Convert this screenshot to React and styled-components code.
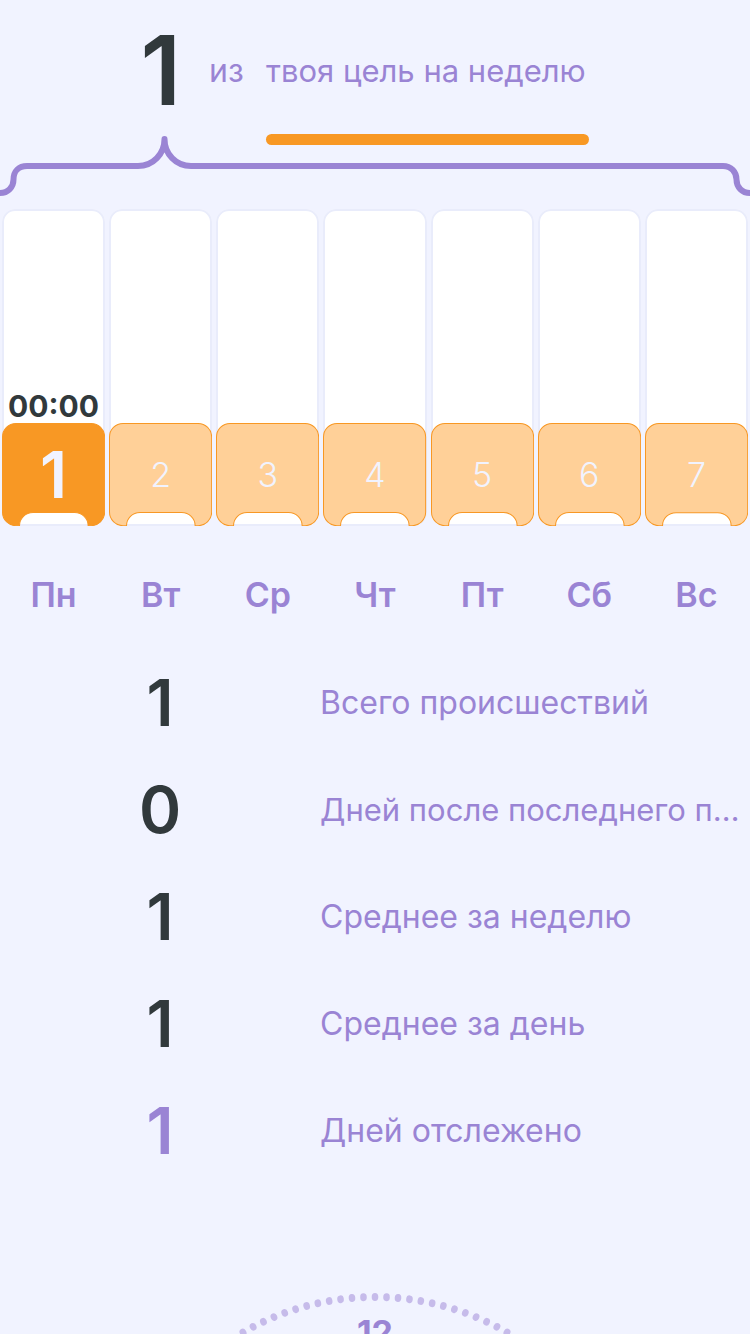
import React from 'react';
import styled, { createGlobalStyle, ThemeProvider } from 'styled-components';

const theme = {
  bg: '#f1f3ff',
  ink: '#31393c',
  violet: '#9a84d4',
  dots: '#c6bbea',
  orange: '#f89824',
  peach: '#ffd098',
  line: '#e9ecfb',
};

const GlobalStyle = createGlobalStyle`
  *, *::before, *::after { box-sizing: border-box; }
  body {
    margin: 0;
    background: ${theme.bg};
    color: ${theme.violet};
    font-family: Inter, "Noto Sans", sans-serif;
    font-size: 32px;
    line-height: 40px;
  }
`;

const Page = styled.main`
  display: flex;
  flex-direction: column;
  height: 100vh;
  overflow-x: hidden;
  overflow-y: auto;
`;

const Header = styled.header`
  flex: none;
  display: grid;
  grid-template-columns: 186fr 80fr 323fr 161fr;
  padding-top: 20px;
`;

const Total = styled.strong`
  padding-right: 5px;
  color: ${({ theme }) => theme.ink};
  font-size: 96px;
  font-weight: 600;
  line-height: 100px;
  text-align: right;
`;

const Of = styled.span`
  padding: 31px 0 0 23px;
`;

const Goal = styled.button`
  display: flex;
  flex-direction: column;
  gap: 43px;
  padding: 31px 0 0;
  border: 0;
  background: none;
  color: inherit;
  font: inherit;
  font-size: 31px;
  text-align: left;
  white-space: nowrap;
  cursor: pointer;

  &::after {
    content: '';
    width: 100%;
    height: 11px;
    border-radius: 6px;
    background: ${({ theme }) => theme.orange};
  }
`;

const Brace = styled.svg`
  flex: none;
  display: block;
  width: 100%;
  margin-top: -11px;
`;

const Week = styled.section`
  flex: none;
  display: grid;
  grid-template-columns: repeat(7, 1fr);
  gap: 4px;
  padding: 9px 2px 0;
`;

const Day = styled.button`
  display: flex;
  flex-direction: column;
  min-width: 0;
  padding: 0;
  border: 0;
  background: none;
  color: inherit;
  font: inherit;
  cursor: pointer;
`;

const Track = styled.span`
  display: flex;
  flex-direction: column;
  width: 100%;
  border-radius: 13px;
  background: #fff;
  box-shadow: inset 0 0 0 2px ${({ theme }) => theme.line};
`;

const Time = styled.span`
  height: 214px;
  padding-top: 177px;
  color: ${({ theme }) => theme.ink};
  font-size: 30px;
  font-weight: 700;
`;

const Tile = styled.span`
  position: relative;
  display: grid;
  place-items: center;
  aspect-ratio: 1;
  color: ${({ theme }) => theme.bg};
  font-size: ${({ $active }) => ($active ? '64px' : '34px')};
  font-weight: ${({ $active }) => ($active ? 600 : 300)};

  svg {
    position: absolute;
    inset: 0;
    width: 100%;
    height: 100%;
  }

  span {
    position: relative;
  }
`;

const DayName = styled.span`
  width: 100%;
  padding-top: 49px;
  font-size: 34px;
  font-weight: 600;
`;

const Stats = styled.dl`
  flex: none;
  display: flex;
  flex-direction: column;
  margin: 34px 0 0;
`;

const Stat = styled.div`
  display: grid;
  grid-template-columns: 32fr 43fr;
  align-items: center;
  height: 107px;
`;

const StatLabel = styled.dt`
  order: 2;
  overflow: hidden;
  font-size: ${({ $long }) => ($long ? '31px' : '32px')};
  text-overflow: ellipsis;
  white-space: nowrap;
`;

const StatValue = styled.dd`
  order: 1;
  margin: 0;
  color: ${({ theme, $muted }) => ($muted ? theme.violet : theme.ink)};
  font-size: 64px;
  font-weight: 600;
  line-height: 64px;
  text-align: center;
`;

const Clock = styled.section`
  flex: 1 0 40px;
  overflow: hidden;
  margin-top: 107px;
  display: flex;
  justify-content: center;

  svg {
    flex: none;
    width: 540px;
    height: 540px;
  }
`;

const TILE =
  'M14 .5H89A13.5 13.5 0 0 1 102.5 14V89A13.5 13.5 0 0 1 89 102.5H86C86 95 80 89.5 72.500 89.5H31C23.500 89.5 17.500 95 17.500 102.500H14A13.5 13.5 0 0 1 .5 89V14A13.5 13.5 0 0 1 14 .5Z';

const days = ['Пн', 'Вт', 'Ср', 'Чт', 'Пт', 'Сб', 'Вс'];

const stats = [
  { label: 'Всего происшествий', value: 1 },
  { label: 'Дней после последнего происшествия', value: 0, long: true },
  { label: 'Среднее за неделю', value: 1 },
  { label: 'Среднее за день', value: 1 },
  { label: 'Дней отслежено', value: 1, muted: true },
];

const ticks = Array.from({ length: 144 }, (_, i) => i * 2.5);

export default function App() {
  return (
    <ThemeProvider theme={theme}>
      <GlobalStyle />
      <Page>
        <Header>
          <Total>1</Total>
          <Of>из</Of>
          <Goal type="button">твоя цель на неделю</Goal>
        </Header>
        <Brace viewBox="0 134 750 66" fill="none" stroke={theme.violet} strokeWidth="6" aria-hidden="true">
          <path
            d="M-2 193H0C8 193 13.500 187 13.500 179.500C13.500 171 19 166 27 166H138C153 166 164.500 154 164.500 139C164.500 154 176 166 191 166H723C731 166 736.500 172 736.500 179.500C736.500 187 742 193 750 193H752"
            strokeLinejoin="round"
          />
        </Brace>
        <Week>
          {days.map((name, i) => (
            <Day key={name} type="button">
              <Track>
                <Time>{i === 0 ? '00:00' : ''}</Time>
                <Tile $active={i === 0}>
                  <svg viewBox="0 0 103 103" aria-hidden="true">
                    <path d={TILE} fill={i === 0 ? theme.orange : theme.peach} stroke={theme.orange} />
                  </svg>
                  <span>{i + 1}</span>
                </Tile>
              </Track>
              <DayName>{name}</DayName>
            </Day>
          ))}
        </Week>
        <Stats>
          {stats.map(({ label, value, muted, long }) => (
            <Stat key={label}>
              <StatLabel $long={long}>{label}</StatLabel>
              <StatValue $muted={muted}>{value}</StatValue>
            </Stat>
          ))}
        </Stats>
        <Clock>
          <svg viewBox="0 0 540 540" role="img" aria-label="12">
            {ticks.map((deg) => (
              <ellipse
                key={deg}
                cx="270"
                cy="6"
                rx="3.300"
                ry="3.900"
                fill={theme.dots}
                transform={`rotate(${deg} 270 270)`}
              />
            ))}
            <text x="270" y="54" textAnchor="middle" fontSize="34" fontWeight="700" fill={theme.violet}>
              12
            </text>
          </svg>
        </Clock>
      </Page>
    </ThemeProvider>
  );
}
